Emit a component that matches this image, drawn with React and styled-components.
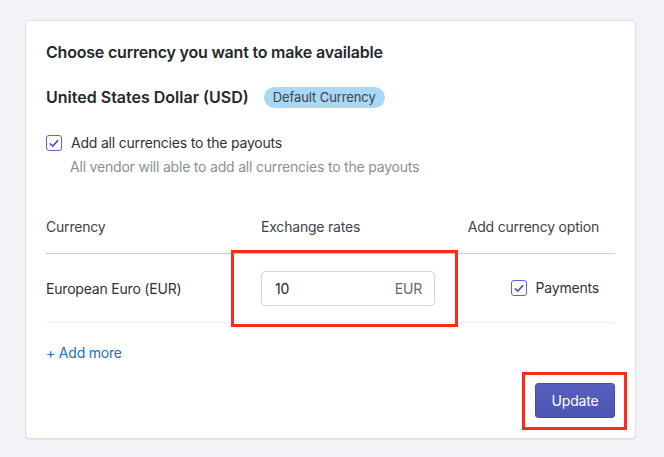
import React from "react";
import styled, { createGlobalStyle } from "styled-components";

const Global = createGlobalStyle`
  html, body { margin: 0; padding: 0; background: #f1f3f6; }
  body { font-family: Inter, "Noto Sans", "Liberation Sans", sans-serif; letter-spacing: -0.2px; -webkit-font-smoothing: antialiased; }
  * { box-sizing: border-box; }
`;

const Page = styled.div`
  padding: 20px 28px 18px 25px;
`;

const Card = styled.div`
  width: 611px;
  background: #fff;
  border: 1px solid #dcdfe4;
  border-radius: 4px;
  box-shadow: 0 1px 1px rgba(0, 0, 0, 0.06);
  padding: 21px 20px 20px;
`;

const Title = styled.h3`
  margin: 0;
  font-size: 16px;
  line-height: 20px;
  font-weight: 600;
  color: #23282d;
`;

const CurrencyLine = styled.div`
  margin-top: 24px;
  display: flex;
  align-items: center;
  gap: 15px;
  height: 22px;
`;

const CurrencyName = styled.span`
  font-size: 16px;
  font-weight: 600;
  letter-spacing: 0;
  color: #23282d;
`;

const Badge = styled.span`
  display: inline-flex;
  align-items: center;
  height: 21px;
  padding: 0 9px;
  border-radius: 11px;
  background: #a9d8f6;
  color: #3c434a;
  font-size: 13px;
  letter-spacing: -0.1px;
  line-height: 1;
`;

const CheckRow = styled.label`
  display: flex;
  align-items: center;
  gap: ${(p) => p.$gap || 9}px;
  font-size: 14px;
  line-height: 20px;
  color: ${(p) => p.$color || "#2c3338"};
`;

const AllCurrencies = styled.div`
  margin-top: 25px;
`;

const Hint = styled.div`
  margin: 4px 0 0 24px;
  font-size: 14px;
  line-height: 20px;
  color: #8c8f94;
`;

const Box = styled.span`
  width: 16px;
  height: 16px;
  border: 1.5px solid #5d65c6;
  border-radius: 3px;
  display: inline-flex;
  align-items: center;
  justify-content: center;
  flex: none;
`;

const Checkbox = () => (
  <Box>
    <svg width="10" height="9" viewBox="0 0 10 9">
      <path d="M1.3 4.8 L3.8 7.1 L8.7 1.6" fill="none" stroke="#4f57bd" strokeWidth="1.6" strokeLinecap="round" strokeLinejoin="round" />
    </svg>
  </Box>
);

const Table = styled.div`
  margin-top: 40px;
  display: grid;
  grid-template-columns: 215px 1fr auto;
`;

const HeadCell = styled.div`
  font-size: 14px;
  line-height: 20px;
  color: #3c434a;
  padding: 0 ${(p) => (p.$last ? 16 : 0)}px 16px 0;
  border-bottom: 1px solid #c9cfd7;
`;

const Cell = styled.div`
  height: 69px;
  display: flex;
  align-items: center;
  justify-content: ${(p) => (p.$last ? "flex-end" : "flex-start")};
  padding-right: ${(p) => (p.$last ? 16 : 0)}px;
  font-size: 14px;
  color: #2c3338;
  border-bottom: 1px solid #eef0f3;
`;

const Highlight = styled.div`
  position: relative;
  &::after {
    content: "";
    position: absolute;
    pointer-events: none;
    top: ${(p) => p.$t}px;
    right: ${(p) => p.$r}px;
    bottom: ${(p) => p.$b}px;
    left: ${(p) => p.$l}px;
    border: 3px solid #ff2a1f;
  }
`;

const InputBox = styled.div`
  width: 174px;
  height: 35px;
  border: 1px solid #cfd5dd;
  border-radius: 4px;
  display: flex;
  align-items: center;
  justify-content: space-between;
  padding: 0 12px 0 13px;
  font-size: 14px;
`;

const InputValue = styled.span`
  color: #1d2327;
`;

const Suffix = styled.span`
  color: #646970;
`;

const AddMore = styled.a`
  display: block;
  margin-top: 20px;
  font-size: 14px;
  line-height: 20px;
  color: #2271b1;
  text-decoration: none;
`;

const Footer = styled.div`
  margin-top: 20px;
  display: flex;
  justify-content: flex-end;
`;

const Button = styled.button`
  width: 80px;
  height: 35px;
  border: 1px solid #444ca6;
  border-radius: 3px;
  background: linear-gradient(#5860c0, #4d55b3);
  color: #fff;
  font-family: inherit;
  letter-spacing: -0.2px;
  font-size: 14px;
`;

export default function App() {
  return (
    <>
      <Global />
      <Page>
        <Card>
          <Title>Choose currency you want to make available</Title>
          <CurrencyLine>
            <CurrencyName>United States Dollar (USD)</CurrencyName>
            <Badge>Default Currency</Badge>
          </CurrencyLine>
          <AllCurrencies>
            <CheckRow>
              <Checkbox />
              Add all currencies to the payouts
            </CheckRow>
            <Hint>All vendor will able to add all currencies to the payouts</Hint>
          </AllCurrencies>
          <Table>
            <HeadCell>Currency</HeadCell>
            <HeadCell>Exchange rates</HeadCell>
            <HeadCell $last>Add currency option</HeadCell>
            <Cell>European Euro (EUR)</Cell>
            <Cell>
              <Highlight $t={-21} $r={-23} $b={-21} $l={-30}>
                <InputBox>
                  <InputValue>10</InputValue>
                  <Suffix>EUR</Suffix>
                </InputBox>
              </Highlight>
            </Cell>
            <Cell $last>
              <CheckRow $gap={9}>
                <Checkbox />
                Payments
              </CheckRow>
            </Cell>
          </Table>
          <AddMore href="#">+ Add more</AddMore>
          <Footer>
            <Highlight $t={-11} $r={-12} $b={-12} $l={-13}>
              <Button>Update</Button>
            </Highlight>
          </Footer>
        </Card>
      </Page>
    </>
  );
}
